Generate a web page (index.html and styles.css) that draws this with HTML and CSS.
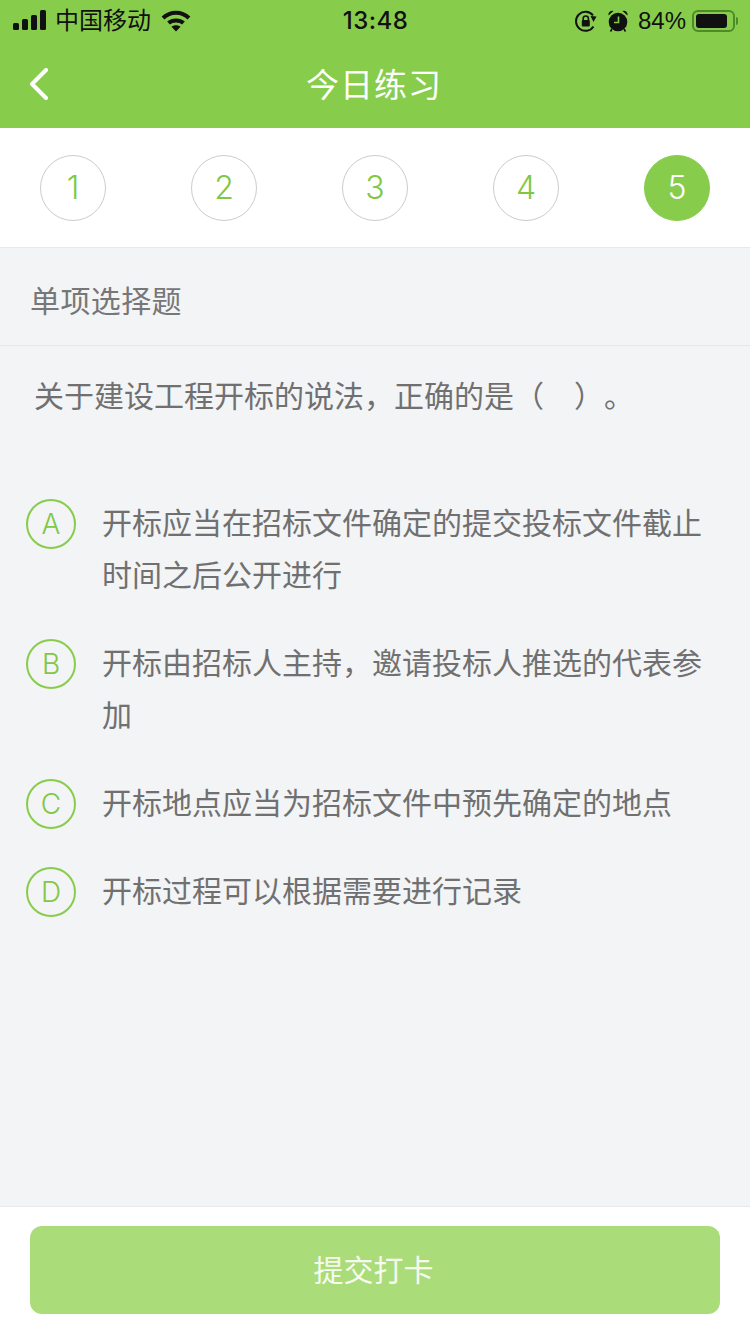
FILE: index.html
```html
<!DOCTYPE html>
<html lang="zh-CN">

<head>
    <meta charset="UTF-8">
    <meta name="viewport" content="width=device-width, initial-scale=1.0">
    <title>今日练习</title>
    <link rel="stylesheet" href="styles.css">
</head>

<body>
    <!-- 状态栏 + 标题 -->
    <header class="top">
        <div class="status">
            <div class="status-side">
                <svg class="signal" width="33" height="20" viewBox="0 0 33 20">
                    <rect x="0" y="13" width="6" height="7" rx="1.5" />
                    <rect x="9" y="9" width="6" height="11" rx="1.5" />
                    <rect x="18" y="5" width="6" height="15" rx="1.5" />
                    <rect x="27" y="0" width="6" height="20" rx="1.5" />
                </svg>
                <span class="carrier">中国移动</span>
                <svg class="wifi" width="30" height="22" viewBox="0 0 30 22">
                    <path d="M2 8 C9.5 1 20.5 1 28 8" />
                    <path d="M7.5 13 C11.5 9.5 18.5 9.5 22.5 13" />
                    <path class="wifi-dot" d="M15 21.5 L10.5 16.8 C13 14.8 17 14.8 19.5 16.8 Z" />
                </svg>
            </div>
            <div class="clock">13:48</div>
            <div class="status-side status-right">
                <svg class="lock" width="22" height="22" viewBox="0 0 22 22">
                    <path class="line" d="M18 5.5 A9.5 9.5 0 1 0 18.5 16.5" />
                    <path class="solid" d="M15.5 6 L21.5 6.5 L18.5 12 Z" />
                    <path class="line thin" d="M8.2 10 V8.6 A2.6 2.6 0 0 1 13.4 8.6 V10" />
                    <rect class="solid" x="6.8" y="10" width="8" height="6.5" rx="1" />
                </svg>
                <svg class="alarm" width="22" height="22" viewBox="0 0 22 22">
                    <circle class="solid" cx="11" cy="12" r="9.3" />
                    <path class="solid" d="M1.5 5.5 A3.8 3.8 0 0 1 6.5 1 Z M20.5 5.5 A3.8 3.8 0 0 0 15.5 1 Z" />
                    <path class="line thin" d="M5 19 L3.5 21.5 M17 19 L18.5 21.5" />
                    <path class="hand" d="M11.5 6.5 V12.5 H7" />
                </svg>
                <span class="percent">84%</span>
                <div class="battery">
                    <div class="battery-level"></div>
                </div>
                <div class="battery-cap"></div>
            </div>
        </div>
        <div class="nav">
            <svg class="back" width="20" height="32" viewBox="0 0 20 32">
                <path d="M17 2 L3 16 L17 30" />
            </svg>
            <h1>今日练习</h1>
        </div>
    </header>

    <!-- 题号 -->
    <section class="steps">
        <div class="step">1</div>
        <div class="step">2</div>
        <div class="step">3</div>
        <div class="step">4</div>
        <div class="step active">5</div>
    </section>

    <main class="content">
        <div class="type">单项选择题</div>
        <p class="question">关于建设工程开标的说法，正确的是（　）。</p>

        <ul class="options">
            <li class="option">
                <span class="letter">A</span>
                <span class="option-text">开标应当在招标文件确定的提交投标文件截止时间之后公开进行</span>
            </li>
            <li class="option">
                <span class="letter">B</span>
                <span class="option-text">开标由招标人主持，邀请投标人推选的代表参加</span>
            </li>
            <li class="option">
                <span class="letter">C</span>
                <span class="option-text">开标地点应当为招标文件中预先确定的地点</span>
            </li>
            <li class="option">
                <span class="letter">D</span>
                <span class="option-text">开标过程可以根据需要进行记录</span>
            </li>
        </ul>
    </main>

    <footer class="bottom">
        <button class="submit" type="button">提交打卡</button>
    </footer>
</body>

</html>
```
FILE: styles.css
```css
* {
    box-sizing: border-box;
}

html,
body {
    height: 100%;
}

body {
    margin: 0;
    display: flex;
    flex-direction: column;
    height: 1334px;
    overflow: hidden;
    background-color: #f3f4f6;
    font-family: "Liberation Sans", "Noto Sans CJK SC", sans-serif;
    color: #707070;
    text-spacing-trim: space-all;
}

.top {
    height: 128px;
    background-color: #87cd4b;
}

.status {
    height: 40px;
    display: grid;
    grid-template-columns: 1fr auto 1fr;
    align-items: center;
    padding: 0 12px 0 13px;
    color: #111;
}

.status-side {
    display: flex;
    align-items: center;
}

.status-right {
    justify-content: flex-end;
}

.signal {
    fill: #111;
    margin: 0 10px 1px 0;
}

.carrier {
    font-size: 24px;
    line-height: 40px;
    margin: 1px 10px 0 -1px;
}

.wifi path {
    fill: none;
    stroke: #111;
    stroke-width: 4;
}

.wifi .wifi-dot {
    fill: #111;
    stroke: none;
}

.clock {
    font-family: Inter, "Liberation Sans", sans-serif;
    font-size: 24px;
    font-weight: 500;
    letter-spacing: 0.5px;
}

.lock {
    margin-right: 10px;
}

.alarm {
    margin-right: 9px;
}

.line {
    fill: none;
    stroke: #111;
    stroke-width: 2;
}

.thin {
    stroke-width: 1.6;
}

.solid {
    fill: #111;
}

.hand {
    fill: none;
    stroke: #87cd4b;
    stroke-width: 1.6;
}

.percent {
    font-size: 24px;
    margin-right: 6px;
}

.battery {
    width: 43px;
    height: 22px;
    padding: 2px;
    border: 2px solid #4f8a28;
    border-radius: 6px;
}

.battery-level {
    width: 31px;
    height: 100%;
    background-color: #111;
    border-radius: 3px;
}

.battery-cap {
    width: 2px;
    height: 8px;
    margin-left: 1px;
    background-color: #4f8a28;
    border-radius: 0 2px 2px 0;
}

.nav {
    position: relative;
    height: 88px;
    padding: 0 2px 2px 0;
    display: flex;
    align-items: center;
    justify-content: center;
}

.nav h1 {
    margin: 0;
    font-size: 33px;
    font-weight: 400;
    letter-spacing: 1px;
    color: #fff;
}

.back {
    position: absolute;
    left: 29px;
    top: 28px;
}

.back path {
    fill: none;
    stroke: #fff;
    stroke-width: 4;
    stroke-linecap: round;
    stroke-linejoin: round;
}

.steps {
    height: 120px;
    display: flex;
    justify-content: space-between;
    align-items: center;
    padding: 0 40px;
    background-color: #fff;
    border-bottom: 1px solid #e8e8e8;
}

.step {
    width: 66px;
    height: 66px;
    display: flex;
    align-items: center;
    justify-content: center;
    border: 1px solid #ccc;
    border-radius: 50%;
    font-family: Inter, "Liberation Sans", sans-serif;
    font-size: 32px;
    font-weight: 300;
    color: #7fc845;
}

.step.active {
    background-color: #87cd4b;
    border-color: #87cd4b;
    color: #fff;
}

.content {
    flex: 1;
}

.type {
    height: 98px;
    display: flex;
    align-items: center;
    padding: 4px 0 0 30px;
    border-bottom: 1px solid #e6e7e9;
    font-size: 30px;
    letter-spacing: 0.4px;
    color: #777;
}

.question {
    margin: 0;
    padding: 29px 0 0 34px;
    font-size: 30px;
    line-height: 44px;
}

.options {
    list-style: none;
    margin: 0;
    padding: 79px 26px 0;
}

.option {
    display: flex;
    margin-bottom: 36px;
}

.letter {
    flex: none;
    width: 50px;
    height: 50px;
    margin-top: 1px;
    display: flex;
    align-items: center;
    justify-content: center;
    border: 2px solid #87cd4b;
    border-radius: 50%;
    font-family: Inter, "Liberation Sans", sans-serif;
    font-size: 28px;
    font-weight: 300;
    color: #7fc845;
}

.option-text {
    width: 605px;
    margin-left: 26px;
    font-size: 30px;
    line-height: 52px;
}

.bottom {
    height: 128px;
    padding: 19px 30px 0;
    background-color: #fff;
    border-top: 1px solid #e8e9eb;
}

.submit {
    display: block;
    width: 100%;
    height: 88px;
    padding: 0 3px 4px 0;
    border: 0;
    border-radius: 12px;
    background-color: #abdc7a;
    font-family: inherit;
    font-size: 30px;
    color: #f6fbf0;
}
```
